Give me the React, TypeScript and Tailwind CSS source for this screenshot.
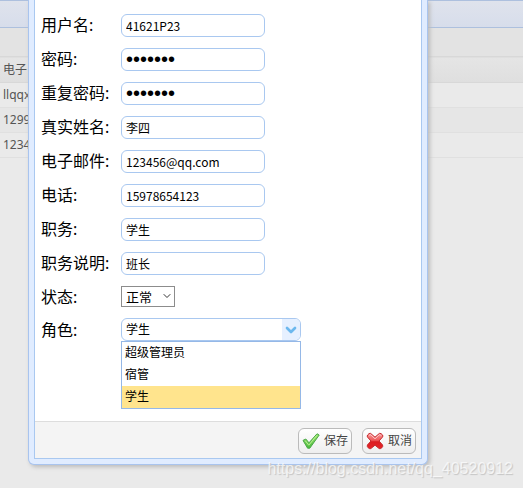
import { useState } from 'react';
import { FiChevronDown } from 'react-icons/fi';

interface Field {
  id: string;
  label: string;
  value: string;
  type?: string;
}

const fields: Field[] = [
  { id: 'username', label: '用户名:', value: '41621P23' },
  { id: 'password', label: '密码:', value: '4162123', type: 'password' },
  { id: 'repeat', label: '重复密码:', value: '4162123', type: 'password' },
  { id: 'realname', label: '真实姓名:', value: '李四' },
  { id: 'email', label: '电子邮件:', value: '123456@qq.com' },
  { id: 'phone', label: '电话:', value: '15978654123' },
  { id: 'job', label: '职务:', value: '学生' },
  { id: 'jobDesc', label: '职务说明:', value: '班长' },
];

const textFont = "text-xs font-['Noto_Sans_CJK_SC',sans-serif]";
const dotFont = "text-xl leading-5 font-['Liberation_Sans',sans-serif]";

const roles = ['超级管理员', '宿管', '学生'];

const rows = ['llqqx', '1299', '1234'];

function OkIcon() {
  return (
    <svg width="18" height="18" viewBox="0 0 18 18" aria-hidden="true">
      <defs>
        <linearGradient id="ok" x1="0" y1="0" x2="0" y2="1">
          <stop offset="0" stopColor="#a4ea72" />
          <stop offset="1" stopColor="#48b83c" />
        </linearGradient>
      </defs>
      <path
        d="M1 8.4 3.8 7 7 10.8 15 1.8 17.2 3 7.8 16.2 5.6 16.2Z"
        fill="url(#ok)"
        stroke="#4aa648"
        strokeWidth="1"
        strokeLinejoin="round"
      />
      <path d="M3.3 8.8 6.8 13.2 14.6 3.6" fill="none" stroke="#c3f59b" strokeWidth="0.9" />
    </svg>
  );
}

function CancelIcon() {
  return (
    <svg width="18" height="18" viewBox="0 0 18 18" aria-hidden="true">
      <defs>
        <linearGradient id="no" x1="0" y1="0" x2="0" y2="1">
          <stop offset="0" stopColor="#f99a9a" />
          <stop offset="0.45" stopColor="#ee5a5a" />
          <stop offset="0.55" stopColor="#dc1c20" />
          <stop offset="1" stopColor="#e52428" />
        </linearGradient>
      </defs>
      <path
        d="M4.6 1.4 9 5.2 13.4 1.4Q15 1 16.6 3 17.2 4.2 16.4 5.2L13 9 16.6 13Q17.2 14.6 15.8 15.8 14.4 17 13.2 16.6L9 13.2 4.8 16.6Q3.4 17 2.2 15.8 .8 14.6 1.4 13L5 9 1.6 5.2Q.8 4.2 1.6 3 3 1 4.6 1.4Z"
        fill="url(#no)"
        stroke="#c5282c"
        strokeWidth="1"
        strokeLinejoin="round"
      />
      <path d="M3 3.6Q4 2.2 4.8 2.8L9 6.8 13.2 2.8Q14.4 2.2 15.2 3.8" fill="none" stroke="#fdd0d0" strokeWidth="0.9" />
    </svg>
  );
}

export default function App() {
  const [values, setValues] = useState<Record<string, string>>(
    Object.fromEntries(fields.map((f) => [f.id, f.value]))
  );
  const [role, setRole] = useState('学生');
  const [open, setOpen] = useState(true);

  return (
    <div className="relative min-h-screen overflow-hidden bg-[#eaeaea] font-['Noto_Sans','Noto_Sans_CJK_SC',sans-serif] text-black">
      {/* Grid behind the window */}
      <div className="h-7 border-y border-[#adc0de] bg-gradient-to-b from-[#dfe3ec] to-[#d7ddeb]" />
      <div className="h-7 bg-[#e3e3e3]" />
      <table className="w-full text-left text-xs text-[#555]">
        <thead>
          <tr className="h-[26px] border-y border-[#d8d8d8] bg-gradient-to-b from-[#e5e5e5] to-[#dfdfdf]">
            <th className="px-[3px] font-normal">电子</th>
          </tr>
        </thead>
        <tbody>
          {rows.map((r) => (
            <tr key={r} className="h-[25px] border-b border-[#e0e0e0] even:bg-[#e6e6e6]">
              <td className="px-[3px]">{r}</td>
            </tr>
          ))}
        </tbody>
      </table>

      {/* Edit window */}
      <div
        role="dialog"
        aria-label="用户"
        className="absolute top-0 left-7 w-[400px] rounded-b-md border border-t-0 border-[#a9c4ee] bg-[#e0ecff] px-[5px] pb-[5px] shadow-[2px_2px_4px_#bbb]"
      >
        <div className="border border-t-0 border-[#a9c8f0] bg-white">
          <form className="px-1.5 pt-2 pb-[75px]">
            {fields.map((f) => (
              <div key={f.id} className="flex h-[34px] items-center">
                <label htmlFor={f.id} className="w-20 text-base">
                  {f.label}
                </label>
                <input
                  id={f.id}
                  type={f.type ?? 'text'}
                  value={values[f.id]}
                  onChange={(e) => setValues({ ...values, [f.id]: e.target.value })}
                  className={`h-[23px] w-[144px] rounded-md border border-[#a9c8f0] px-1 outline-none ${
                    f.type === 'password' ? dotFont : textFont
                  }`}
                />
              </div>
            ))}

            <div className="flex h-[33px] items-center">
              <label htmlFor="state" className="w-20 text-base">
                状态:
              </label>
              <div className="relative">
                <select
                  id="state"
                  className="block h-[21px] w-[54px] appearance-none border border-[#8c8c8c] bg-white px-1 text-[13px] leading-4"
                >
                  <option>正常</option>
                  <option>禁用</option>
                </select>
                <FiChevronDown className="pointer-events-none absolute top-1 right-0.5 text-[#333]" size={12} />
              </div>
            </div>

            <div className="flex h-[33px] items-center">
              <label htmlFor="role" className="w-20 text-base">
                角色:
              </label>
              <div className="relative w-[180px]">
                <div className="flex h-[23px] overflow-hidden rounded-md border border-[#a9c8f0]">
                  <input
                    id="role"
                    value={role}
                    onChange={(e) => setRole(e.target.value)}
                    className="min-w-0 flex-1 px-1 text-xs outline-none"
                  />
                  <button
                    type="button"
                    aria-label="展开"
                    onClick={() => setOpen(!open)}
                    className="flex w-[18px] items-center justify-center bg-[#e6f0ff] text-[#6cb8ee]"
                  >
                    <FiChevronDown size={16} strokeWidth={4} />
                  </button>
                </div>
                {open && (
                  <ul role="listbox" className="absolute top-full w-full border border-[#95b8e7] bg-white text-xs">
                    {roles.map((r) => (
                      <li
                        key={r}
                        role="option"
                        aria-selected={r === role}
                        onClick={() => setRole(r)}
                        className={`px-[3px] leading-[22px] ${r === role ? 'bg-[#ffe48d]' : ''}`}
                      >
                        {r}
                      </li>
                    ))}
                  </ul>
                )}
              </div>
            </div>
          </form>

          <div className="flex justify-end gap-2.5 border-t border-[#ddd] bg-[#f4f4f4] px-[5px] pt-1.5 pb-1 text-xs text-[#444]">
            <button type="button" className="flex h-[26px] items-center gap-1 rounded-md border border-[#bbb] bg-gradient-to-b from-white to-[#eee] px-[3px]">
              <OkIcon />
              保存
            </button>
            <button type="button" className="flex h-[26px] items-center gap-1 rounded-md border border-[#bbb] bg-gradient-to-b from-white to-[#eee] px-[3px]">
              <CancelIcon />
              取消
            </button>
          </div>
        </div>
      </div>

      <p className="absolute right-2.5 bottom-[7px] font-['Liberation_Sans',sans-serif] text-base text-white/70 [text-shadow:1px_1px_1px_#c4c4c4]">
        https://blog.csdn.net/qq_40520912
      </p>
    </div>
  );
}
